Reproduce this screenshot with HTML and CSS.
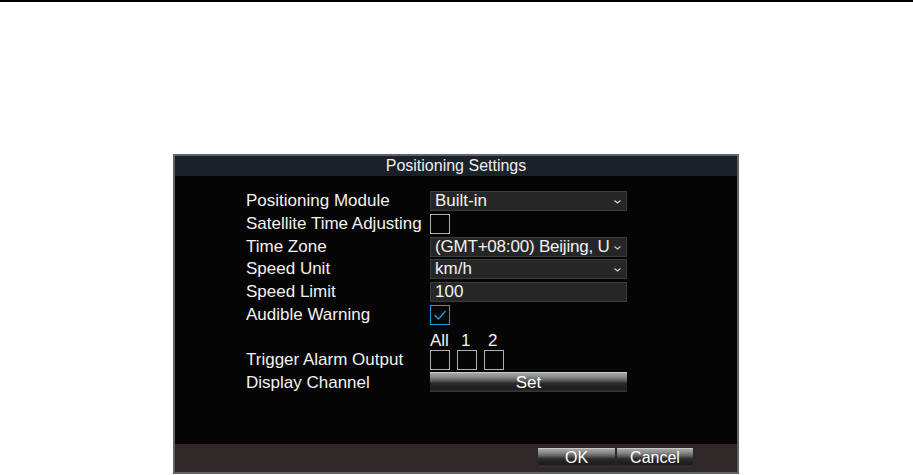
FILE: index.html
```html
<!DOCTYPE html>
<html>
<head>
<meta charset="utf-8">
<link rel="stylesheet" href="styles.css">
</head>
<body>
<div class="topline"></div>
<div class="dialog">
  <div class="titlebar">Positioning Settings</div>
  <div class="content">
    <div class="row">
      <div class="label">Positioning Module</div>
      <div class="select"><span class="val">Built-in</span><svg class="chev" width="7" height="4" viewBox="0 0 7 4"><path d="M0.5 0.5 L3.5 3 L6.5 0.5" fill="none" stroke="#cfcfcf" stroke-width="1.1"/></svg></div>
    </div>
    <div class="row">
      <div class="label">Satellite Time Adjusting</div>
      <div class="check"></div>
    </div>
    <div class="row">
      <div class="label">Time Zone</div>
      <div class="select"><span class="val tight">(GMT+08:00) Beijing, U</span><svg class="chev" width="7" height="4" viewBox="0 0 7 4"><path d="M0.5 0.5 L3.5 3 L6.5 0.5" fill="none" stroke="#cfcfcf" stroke-width="1.1"/></svg></div>
    </div>
    <div class="row">
      <div class="label">Speed Unit</div>
      <div class="select"><span class="val">km/h</span><svg class="chev" width="7" height="4" viewBox="0 0 7 4"><path d="M0.5 0.5 L3.5 3 L6.5 0.5" fill="none" stroke="#cfcfcf" stroke-width="1.1"/></svg></div>
    </div>
    <div class="row">
      <div class="label">Speed Limit</div>
      <div class="input">100</div>
    </div>
    <div class="row">
      <div class="label">Audible Warning</div>
      <div class="check checked"><svg width="14" height="12" viewBox="0 0 14 12"><path d="M1.5 6 L5.5 10 L12.5 2" fill="none" stroke="#1e9fe2" stroke-width="1.3"/></svg></div>
    </div>
    <div class="row">
      <div class="label"></div>
      <div class="nums"><span class="n0">All</span><span class="n1">1</span><span class="n2">2</span></div>
    </div>
    <div class="row">
      <div class="label">Trigger Alarm Output</div>
      <div class="checks"><div class="check"></div><div class="check"></div><div class="check"></div></div>
    </div>
    <div class="row">
      <div class="label">Display Channel</div>
      <div class="btn wide">Set</div>
    </div>
  </div>
  <div class="footer">
    <div class="btn ok">OK</div>
    <div class="btn cancel">Cancel</div>
  </div>
</div>
</body>
</html>
```
FILE: styles.css
```css
html, body {
  margin: 0;
  padding: 0;
  background: #ffffff;
}
body {
  font-family: "Liberation Sans", Arial, sans-serif;
  color: #f2f2f2;
}
.topline {
  height: 2px;
  background: #000;
}
.dialog {
  margin: 152px 0 0 173px;
  width: 562px;
  height: 316px;
  border: 2px solid #5f6363;
  background: #050505;
  display: flex;
  flex-direction: column;
}
.titlebar {
  height: 20px;
  line-height: 20px;
  background: #1b2129;
  text-align: center;
  font-size: 16px;
  color: #eeeeee;
}
.content {
  flex: 1;
  padding: 15px 0 0 71px;
  display: flex;
  flex-direction: column;
}
.row {
  display: flex;
  height: 22.75px;
  align-items: flex-start;
}
.label {
  width: 184px;
  font-size: 17px;
  line-height: 20px;
  white-space: nowrap;
}
.select, .input {
  box-sizing: border-box;
  width: 197px;
  height: 20px;
  background: #262626;
  border: 1px solid #3c3c3c;
  display: flex;
  align-items: center;
  font-size: 17px;
  padding-left: 4px;
  position: relative;
}
.select .val {
  flex: 1;
  white-space: nowrap;
}
.select .val.tight {
  letter-spacing: -0.2px;
}
.chev {
  position: absolute;
  right: 5px;
  top: 8px;
}
.check {
  box-sizing: border-box;
  width: 20px;
  height: 20px;
  border: 1px solid #b0b0b0;
  display: flex;
  align-items: center;
  justify-content: center;
}
.check.checked {
  border: 1px solid #1e9fe2;
}
.checks {
  display: flex;
  gap: 7px;
}
.nums {
  width: 197px;
  height: 20px;
  font-size: 17px;
  line-height: 20px;
  display: flex;
  padding-top: 3px;
}
.nums span { display: block; }
.n0 { width: 30px; }
.n1 { width: 27px; padding-left: 1px; }
.btn {
  box-sizing: border-box;
  height: 20px;
  line-height: 19px;
  text-align: center;
  color: #ffffff;
  background: linear-gradient(#a8a8a8 0%, #8a8a8a 20%, #5a5a5a 40%, #2a2a2a 55%, #1c1c1c 85%, #3a3a3a 100%);
  border-top: 1px solid #c8c8c8;
  font-size: 17px;
}
.btn.wide {
  width: 197px;
  margin-top: -1px;
}
.footer {
  height: 28px;
  background: #2f2728;
  display: flex;
  justify-content: flex-end;
  padding: 4px 44px 0 0;
  box-sizing: border-box;
  gap: 2px;
}
.footer .btn {
  height: 19px;
  line-height: 18px;
  font-size: 16px;
}
.ok { width: 77px; }
.cancel { width: 76px; }
```
